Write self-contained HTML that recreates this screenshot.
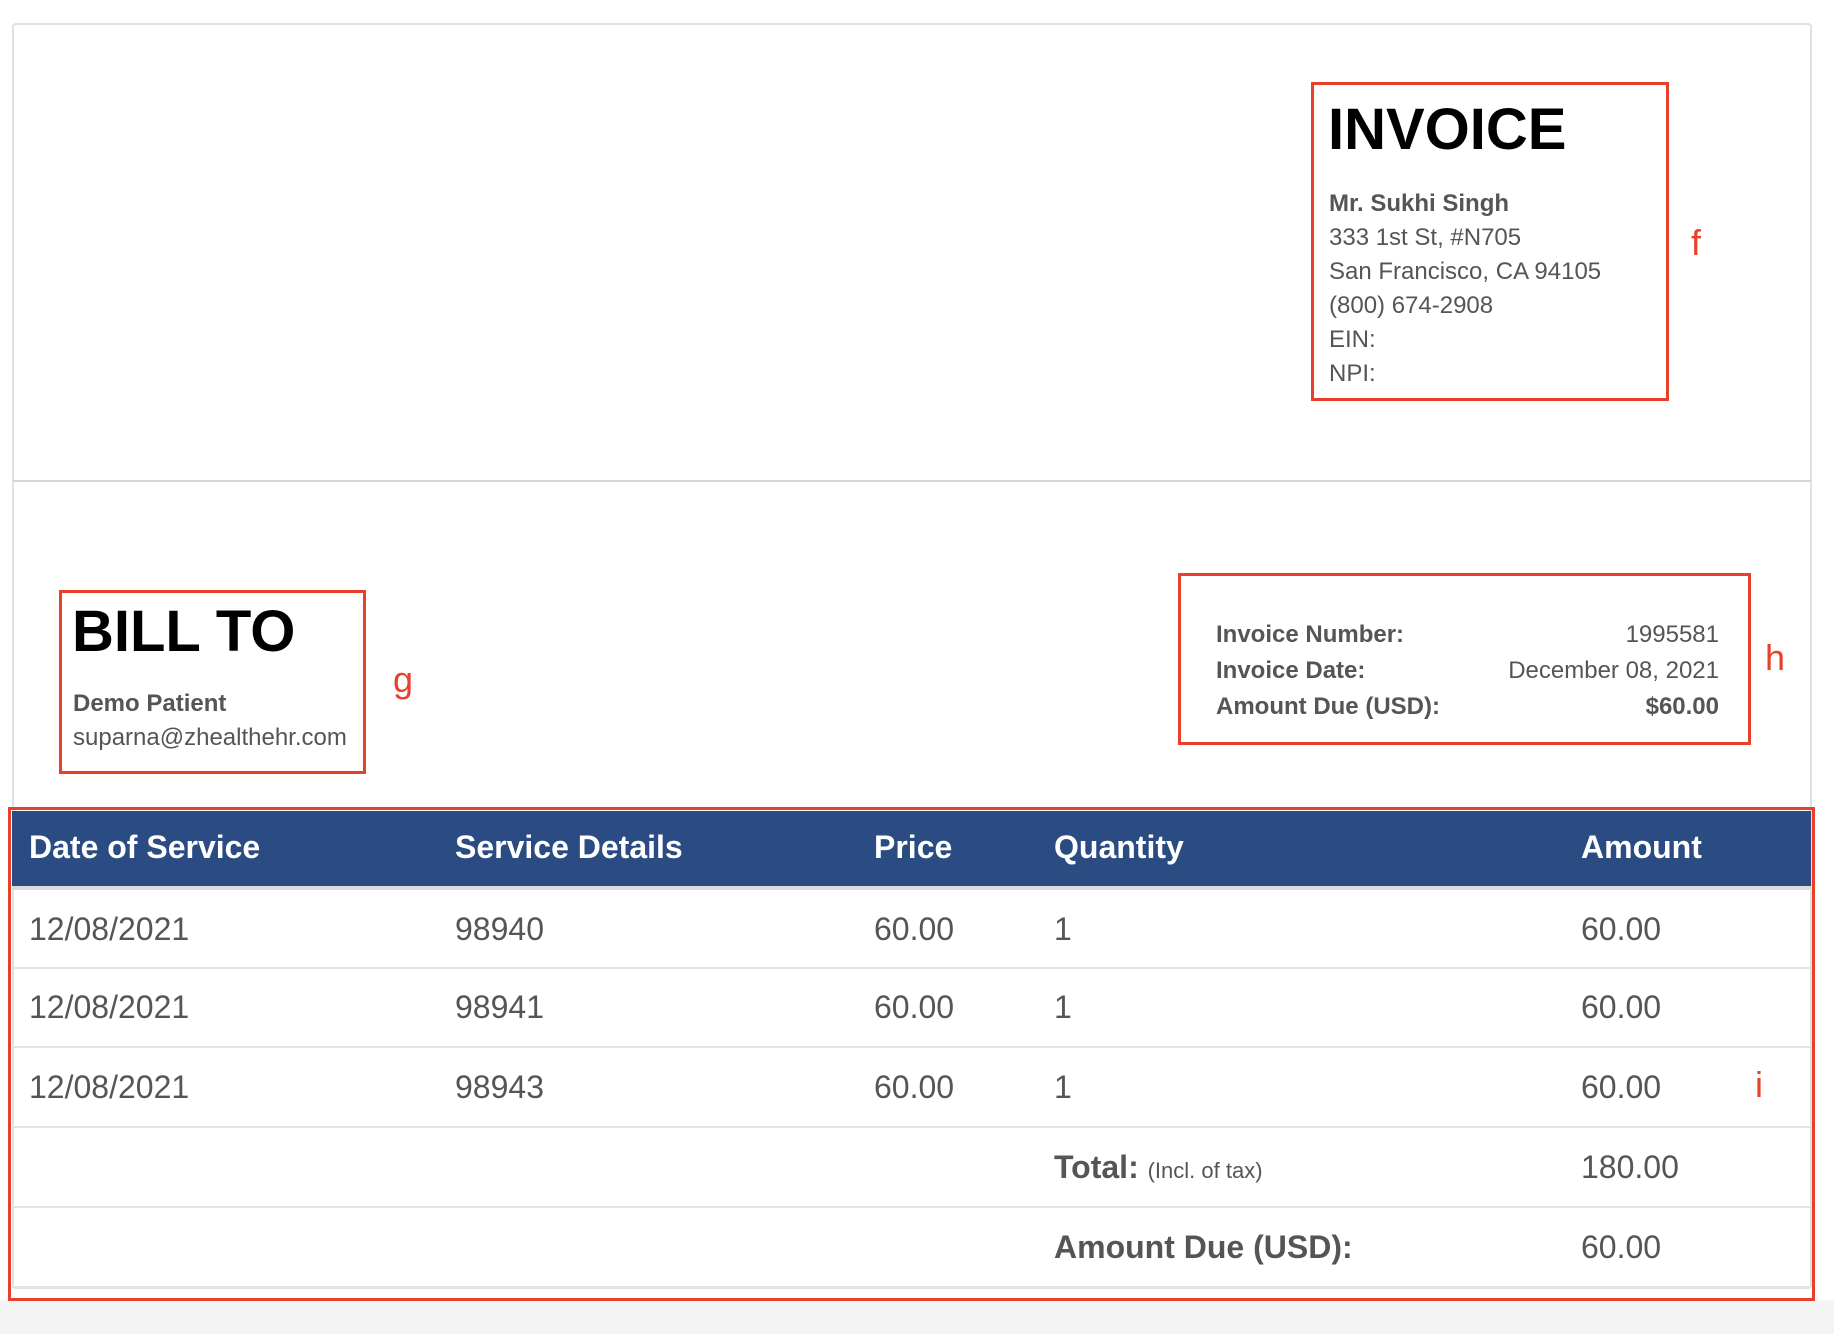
<!DOCTYPE html>
<html><head><meta charset="utf-8"><style>
*{margin:0;padding:0;box-sizing:border-box}
body{width:1834px;height:1334px;background:#fff;position:relative;overflow:hidden;font-family:"Liberation Sans",Arial,sans-serif;color:#555}
.a{position:absolute;white-space:nowrap}
.red{border:3px solid #e8402a;position:absolute}
.lbl{position:absolute;color:#e8402a;font-size:36px;line-height:1}
.hd{color:#fff;font-weight:bold;font-size:32px}
.td{font-size:32px;color:#555}
.sep{position:absolute;left:12px;width:1799px;height:2px;background:#e2e2e2}
</style></head><body>
<div style="position:absolute;left:0;top:1300px;width:1834px;height:34px;background:#f4f4f4"></div>
<div style="position:absolute;left:12px;top:23px;width:1800px;height:1266px;border:2px solid #e0e0e0;border-radius:4px"></div>
<div style="position:absolute;left:13px;top:480px;width:1798px;height:2px;background:#d6d6d6"></div>

<div class="red" style="left:1311px;top:82px;width:358px;height:319px"></div>
<div class="a" style="left:1328px;top:95px;font-size:58px;font-weight:bold;color:#000;line-height:70px">INVOICE</div>
<div class="a" style="left:1329px;top:187px;font-size:24px;line-height:34px">
<b>Mr. Sukhi Singh</b><br>333 1st St, #N705<br>San Francisco, CA 94105<br>(800) 674-2908<br>EIN:<br>NPI:</div>
<div class="lbl" style="left:1691px;top:225px">f</div>

<div class="red" style="left:59px;top:590px;width:307px;height:184px"></div>
<div class="a" style="left:72px;top:597px;font-size:58px;font-weight:bold;color:#000;line-height:70px">BILL TO</div>
<div class="a" style="left:73px;top:687px;font-size:24px;line-height:34px"><b>Demo Patient</b><br>suparna@zhealthehr.com</div>
<div class="lbl" style="left:393px;top:662px">g</div>

<div class="red" style="left:1178px;top:573px;width:573px;height:172px"></div>
<div class="a" style="left:1216px;top:617px;width:503px;font-size:24px;line-height:36px">
<div style="display:flex;justify-content:space-between"><b>Invoice Number:</b><span>1995581</span></div>
<div style="display:flex;justify-content:space-between"><b>Invoice Date:</b><span>December 08, 2021</span></div>
<div style="display:flex;justify-content:space-between"><b>Amount Due (USD):</b><b>$60.00</b></div>
</div>
<div class="lbl" style="left:1765px;top:640px">h</div>

<div style="position:absolute;left:12px;top:811px;width:1799px;height:75px;background:#2a4c82"></div>
<div style="position:absolute;left:12px;top:886px;width:1799px;height:4px;background:#dcdcdc"></div>
<div class="a hd" style="left:29px;top:829px">Date of Service</div>
<div class="a hd" style="left:455px;top:829px">Service Details</div>
<div class="a hd" style="left:874px;top:829px">Price</div>
<div class="a hd" style="left:1054px;top:829px">Quantity</div>
<div class="a hd" style="left:1581px;top:829px">Amount</div>

<div class="a td" style="left:29px;top:911px">12/08/2021</div><div class="a td" style="left:455px;top:911px">98940</div><div class="a td" style="left:874px;top:911px">60.00</div><div class="a td" style="left:1054px;top:911px">1</div><div class="a td" style="left:1581px;top:911px">60.00</div>
<div class="sep" style="top:967px"></div>
<div class="a td" style="left:29px;top:989px">12/08/2021</div><div class="a td" style="left:455px;top:989px">98941</div><div class="a td" style="left:874px;top:989px">60.00</div><div class="a td" style="left:1054px;top:989px">1</div><div class="a td" style="left:1581px;top:989px">60.00</div>
<div class="sep" style="top:1046px"></div>
<div class="a td" style="left:29px;top:1069px">12/08/2021</div><div class="a td" style="left:455px;top:1069px">98943</div><div class="a td" style="left:874px;top:1069px">60.00</div><div class="a td" style="left:1054px;top:1069px">1</div><div class="a td" style="left:1581px;top:1069px">60.00</div>
<div class="lbl" style="left:1755px;top:1067px">i</div>
<div class="sep" style="top:1126px"></div>
<div class="a td" style="left:1054px;top:1149px"><b>Total:</b> <span style="font-size:22px">(Incl. of tax)</span></div><div class="a td" style="left:1581px;top:1149px">180.00</div>
<div class="sep" style="top:1206px"></div>
<div class="a td" style="left:1054px;top:1229px"><b>Amount Due (USD):</b></div><div class="a td" style="left:1581px;top:1229px">60.00</div>
<div class="sep" style="top:1286px"></div>

<div class="red" style="left:8px;top:807px;width:1807px;height:494px"></div>
</body></html>
